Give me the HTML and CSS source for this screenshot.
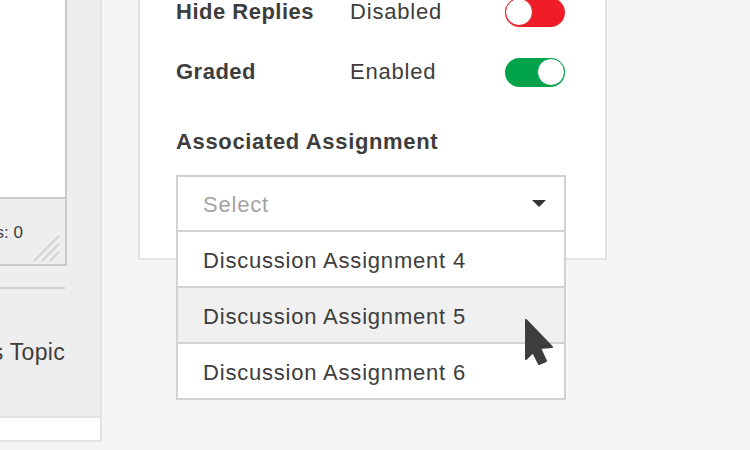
FILE: index.html
```html
<!DOCTYPE html>
<html lang="en">
<head>
  <meta charset="UTF-8" />
  <meta name="viewport" content="width=device-width, initial-scale=1.0"/>
  <title>Discussion Settings</title>
  <link rel="stylesheet" href="styles.css">
</head>
<body>
  <div class="page">
    <div class="side">
      <div class="side-main">
        <div class="editor">
          <div class="editor-body"></div>
          <div class="editor-foot">
            <span class="count">Words: 0</span>
            <svg class="grip" width="28" height="28" viewBox="0 0 28 28">
              <path d="M2 27 L27 2 M10 27 L27 10 M18 27 L27 18" stroke="#d2d2d2" stroke-width="2" fill="none"/>
            </svg>
          </div>
        </div>
        <div class="rule"></div>
        <div class="topic">Pin Discussions Topic</div>
      </div>
      <div class="side-foot"></div>
    </div>

    <div class="card">
      <div class="setting">
        <span class="setting-name">Hide Replies</span>
        <span class="setting-value">Disabled</span>
        <span class="toggle off"><span class="knob"></span></span>
      </div>
      <div class="setting">
        <span class="setting-name">Graded</span>
        <span class="setting-value">Enabled</span>
        <span class="toggle on"><span class="knob"></span></span>
      </div>

      <div class="field-label">Associated Assignment</div>
      <div class="select">
        <div class="select-box">
          <span class="placeholder">Select</span>
          <svg class="caret" width="14" height="7" viewBox="0 0 14 7">
            <path d="M0 0 H14 L7 7 Z" fill="#333"/>
          </svg>
        </div>
        <ul class="options">
          <li>Discussion Assignment 4</li>
          <li class="hover">Discussion Assignment 5</li>
          <li>Discussion Assignment 6</li>
        </ul>
        <svg class="pointer" width="32" height="48" viewBox="0 0 32 48">
          <path d="M1 1 L1 40 L8 33 L14 45 L21 42 L15 29 L27 28 Z" fill="#3d3d3d" stroke="#3d3d3d" stroke-width="2" stroke-linejoin="round"/>
        </svg>
      </div>
    </div>
  </div>
</body>
</html>
```

FILE: styles.css
```css
body {
  margin: 0;
  background-color: #f5f5f5;
  font-family: 'Liberation Sans', Arial, sans-serif;
  color: #3d3d3d;
  overflow: hidden;
}

.page {
  display: flex;
  align-items: flex-start;
  height: 450px;
}

/* left column, cut off by the window */
.side {
  width: 100px;
  height: 440px;
  display: flex;
  flex-direction: column;
  border-right: 2px solid #e4e4e4;
  border-bottom: 2px solid #e4e4e4;
  overflow: hidden;
}

.side-main {
  flex: 1;
  background-color: #eeeeee;
  border-bottom: 2px solid #e4e4e4;
}

.side-foot {
  height: 22px;
  background-color: #fff;
}

.editor {
  margin-left: -300px;
  width: 363px;
  border: 2px solid #cacaca;
  border-top: none;
}

.editor-body {
  height: 197px;
  background-color: #fff;
  border-bottom: 2px solid #cacaca;
}

.editor-foot {
  height: 65px;
  display: flex;
  align-items: center;
  justify-content: flex-end;
  position: relative;
  padding-right: 42px;
  box-sizing: border-box;
}

.count {
  font-size: 17px;
  margin-top: 2px;
}

.grip {
  position: absolute;
  right: 5px;
  bottom: 2px;
}

.rule {
  margin: 21px 0 0 -300px;
  width: 365px;
  border-top: 2px solid #cfcfcf;
}

.topic {
  margin-left: -300px;
  width: 365px;
  text-align: right;
  font-size: 23px;
  line-height: 30px;
  margin-top: 48px;
  letter-spacing: 0.3px;
}

/* settings card */
.card {
  margin-left: 36px;
  width: 390px;
  padding: 0 39px 26px 36px;
  background-color: #fff;
  border: 2px solid #e4e4e4;
  border-top: none;
}

.setting {
  display: flex;
  align-items: center;
  height: 30px;
  font-size: 22px;
  letter-spacing: 0.8px;
}

.setting:first-child {
  margin-top: -3px;
}

.setting + .setting {
  margin-top: 30px;
}

.setting-name {
  width: 174px;
  font-weight: bold;
  letter-spacing: 0.5px;
}

.setting-value {
  flex: 1;
}

.toggle {
  width: 60px;
  height: 29px;
  border-radius: 15px;
  display: flex;
  align-items: center;
  box-sizing: border-box;
  margin-right: 1px;
}

.toggle.off {
  background-color: #ee1d26;
  justify-content: flex-start;
}

.toggle.on {
  background-color: #00a24a;
  justify-content: flex-end;
}

.knob {
  width: 28px;
  height: 28px;
  border-radius: 50%;
  background-color: #fff;
  box-sizing: border-box;
}

.toggle.off .knob {
  border: 1px solid #ee1d26;
}

.toggle.on .knob {
  border: 1px solid #00a24a;
}

.field-label {
  margin-top: 40px;
  font-size: 22px;
  line-height: 30px;
  font-weight: bold;
  letter-spacing: 0.65px;
}

.select {
  margin-top: 18px;
  position: relative;
}

.select-box {
  height: 53px;
  border: 2px solid #d2d2d2;
  display: flex;
  align-items: center;
  justify-content: space-between;
  padding: 0 18px 0 25px;
}

.placeholder {
  color: #a3a3a3;
  font-size: 22px;
  letter-spacing: 0.8px;
  margin-top: 2px;
}

.options {
  position: absolute;
  top: 100%;
  left: 0;
  right: 0;
  margin: 0;
  padding: 0;
  list-style: none;
  background-color: #fff;
  border: 2px solid #d2d2d2;
  border-top: none;
}

.options li {
  height: 50px;
  padding: 4px 0 0 25px;
  display: flex;
  align-items: center;
  font-size: 22px;
  letter-spacing: 0.8px;
  border-top: 2px solid #d2d2d2;
}

.options li:first-child {
  border-top: none;
}

.options li.hover {
  background-color: #f0f0f0;
}

.pointer {
  position: absolute;
  left: 349px;
  top: 144px;
}
```
